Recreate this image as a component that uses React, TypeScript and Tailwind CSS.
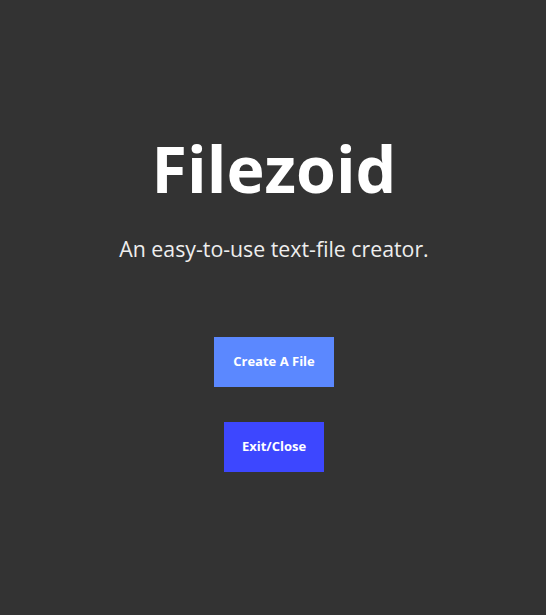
export default function App() {
  return (
    <div className="min-h-screen bg-[#333333] flex flex-col items-center text-white pl-[2px]" style={{ fontFamily: '"Open Sans", sans-serif' }}>
      <h1 className="mt-[131px] text-[64.5px] font-bold leading-[74px]">Filezoid</h1>
      <p className="mt-[30px] text-[21.3px] leading-[28px] text-[#eeeeee]">An easy-to-use text-file creator.</p>
      <button className="mt-[74px] w-[120px] h-[50px] bg-[#5b88ff] text-[13px] font-bold">Create A File</button>
      <button className="mt-[35px] w-[100px] h-[50px] bg-[#3d47ff] text-[13px] font-bold">Exit/Close</button>
    </div>
  );
}
